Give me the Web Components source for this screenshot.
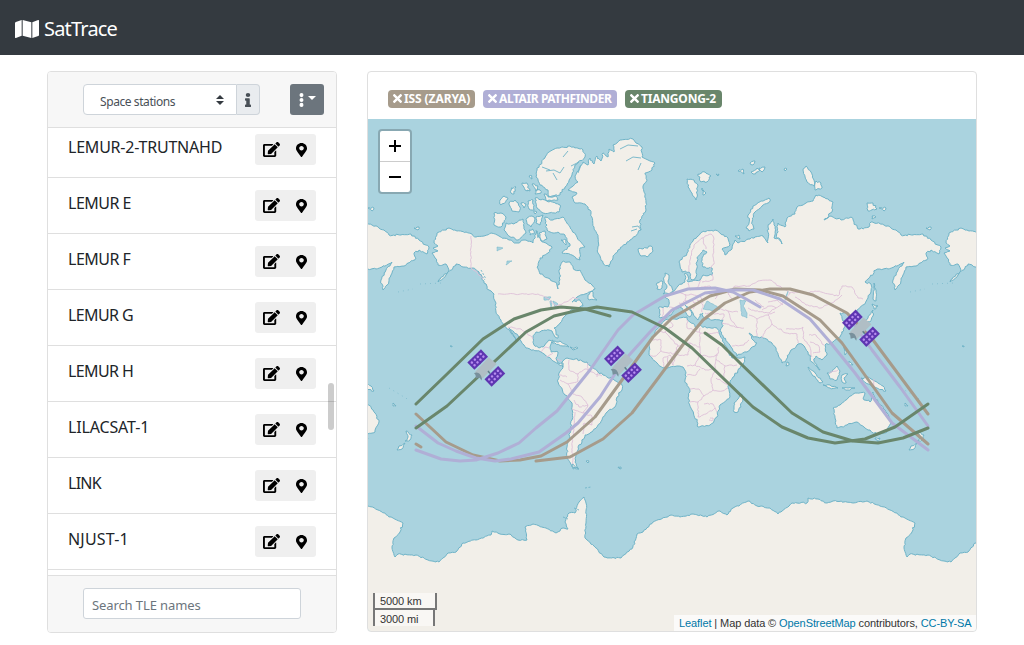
<!DOCTYPE html>
<html lang="en">
<head>
<meta charset="utf-8">
<title>SatTrace</title>
<style>
html,body{margin:0;height:100%;overflow:hidden;background:#fff}
body{font:16px/24px "Noto Sans",sans-serif;color:#212529}
</style>
</head>
<body>
<sat-app></sat-app>
<script>
const define = (name, html, ready) => customElements.define(name, class extends HTMLElement {
  constructor() {
    super();
    this.attachShadow({ mode: 'open' });
  }
  connectedCallback() {
    this.shadowRoot.innerHTML = '<style>*{box-sizing:border-box}</style>' + (typeof html === 'function' ? html(this) : html);
    if (ready) ready(this.shadowRoot, this);
  }
});

/* ---------- icons ---------- */
const ICONS = {
  map: ['0 0 576 512', '<path d="M0 118v379c0 11 11 19 22 15l138-64V0L20 58A32 32 0 0 0 0 88zM184 448l208 64V64L184 0zM554 1L416 64v448l140-56a32 32 0 0 0 20-30V16c0-11-11-19-22-15z"/>'],
  edit: ['0 0 576 512', '<path d="M402.6 83.2l90.2 90.2c3.8 3.8 3.8 10 0 13.800L274.400 405.600l-92.800 10.300c-12.400 1.400-22.900-9.100-21.500-21.500l10.300-92.800L388.800 83.200c3.800-3.800 10-3.800 13.800 0zm162-22.900l-48.800-48.800c-15.200-15.200-39.900-15.200-55.200 0l-35.400 35.400c-3.800 3.800-3.800 10 0 13.800l90.200 90.200c3.800 3.800 10 3.800 13.800 0l35.400-35.400c15.200-15.300 15.200-40 0-55.200zM384 346.200V448H64V128h229.800c3.200 0 6.200-1.300 8.500-3.500l40-40c7.600-7.600 2.200-20.500-8.500-20.500H48C21.500 64 0 85.500 0 112v352c0 26.500 21.500 48 48 48h352c26.500 0 48-21.500 48-48V306.200c0-10.700-12.900-16-20.500-8.500l-40 40c-2.200 2.300-3.500 5.300-3.500 8.500z"/>'],
  pin: ['0 0 384 512', '<path d="M172.300 501.700C27 291 0 269.400 0 192 0 86 86 0 192 0s192 86 192 192c0 77.400-27 99-172.300 309.700-9.500 13.800-29.900 13.800-39.400 0zM192 272c44.200 0 80-35.800 80-80s-35.800-80-80-80-80 35.800-80 80 35.800 80 80 80z"/>'],
  info: ['0 0 192 512', '<path d="M20 424.200h20V279.800H20c-11 0-20-9-20-20V212c0-11 9-20 20-20h112c11 0 20 9 20 20v212.200h20c11 0 20 9 20 20V492c0 11-9 20-20 20H20c-11 0-20-9-20-20v-47.800c0-11 9-20 20-20zM96 0a72 72 0 1 0 0 144A72 72 0 0 0 96 0z"/>'],
  times: ['0 0 352 352', '<path d="M243 176l100-100c12-12 12-32 0-44L320 9c-12-12-32-12-44 0L176 109 76 9C64-3 44-3 32 9L9 32c-12 12-12 32 0 44l100 100L9 276c-12 12-12 32 0 44l23 23c12 12 32 12 44 0l100-100 100 100c12 12 32 12 44 0l23-23c12-12 12-32 0-44z"/>'],
  dots: ['0 0 192 512', '<circle cx="96" cy="76" r="76"/><circle cx="96" cy="256" r="76"/><circle cx="96" cy="436" r="76"/>'],
  sort: ['0 0 8 11', '<path d="M4 0L8 4.500H0zM4 11L0 6.500h8z"/>']
};
define('sat-icon', el => {
  const [box, body] = ICONS[el.getAttribute('name')];
  return `<style>:host{display:inline-block;flex:none}svg{display:block;width:100%;height:100%;fill:currentColor}</style><svg viewBox="${box}" preserveAspectRatio="none">${body}</svg>`;
});

define('sat-navbar', `<style>
:host{display:flex;align-items:center;height:55px;padding:2px 15px 0;background:#343a40;color:#fff;font-size:20px;gap:5px;box-sizing:border-box}
sat-icon{width:24px;height:18px}
span{letter-spacing:-.8px;padding-top:1px}
</style><sat-icon name="map"></sat-icon><span><slot></slot></span>`);

define('sat-card', `<style>
:host{display:flex;flex-direction:column;border:1px solid #dfdfdf;border-radius:4px;overflow:hidden;background:#fff}
</style><slot></slot>`);

/* ---------- satellite list ---------- */
define('sat-toolbar', `<style>
:host{display:flex;height:56px;flex:none;padding:12px 12px 0 35px;background:#f7f7f7;border-bottom:1px solid #dfdfdf;font-size:12px;color:#495057;box-sizing:border-box}
.select{display:flex;align-items:center;justify-content:space-between;width:154px;height:31px;border:1px solid #ced4da;border-radius:4px 0 0 4px;background:#fff;padding:4px 12px 0 16px}
.select span{white-space:nowrap;letter-spacing:-.42px}
.select sat-icon{width:8px;height:10px;color:#343a40;margin-top:-4px}
.info{display:flex;align-items:center;justify-content:center;width:23px;height:31px;border:1px solid #ced4da;border-left:0;border-radius:0 4px 4px 0;background:#e9ecef}
.info sat-icon{width:6px;height:14px}
.menu{display:flex;align-items:center;gap:4px;width:34px;height:31px;margin-left:auto;padding-left:9px;border-radius:3px;background:#6c757d;color:#fff}
.menu sat-icon{width:5px;height:14px}
.caret{border:4px solid transparent;border-top-color:#fff;border-bottom:0;margin-top:-3px}
</style>
<div class="select"><span>Space stations</span><sat-icon name="sort"></sat-icon></div>
<div class="info"><sat-icon name="info"></sat-icon></div>
<div class="menu"><sat-icon name="dots"></sat-icon><i class="caret"></i></div>`);

define('sat-row', el => `<style>
:host{display:flex;height:56px;flex:none;padding:12px 20px 0;border-bottom:1px solid #dfdfdf;justify-content:space-between;box-sizing:border-box}
span{letter-spacing:${el.getAttribute('tracking')}px;white-space:nowrap;padding-top:1px}
.actions{display:flex;align-items:center;gap:16px;width:61px;height:31px;padding-left:8px;background:#efefef;border-radius:3px;color:#000}
.edit{width:17px;height:15px}.pin{width:11px;height:14px}
</style><span><slot></slot></span>
<div class="actions"><sat-icon class="edit" name="edit"></sat-icon><sat-icon class="pin" name="pin"></sat-icon></div>`);

define('sat-list', `<style>
:host{display:flex;flex-direction:column;justify-content:flex-start;flex:1;min-height:0;overflow:hidden;position:relative}
.rows{margin-top:-6px}
.thumb{position:absolute;right:2px;top:255px;width:6px;height:47px;border-radius:3px;background:rgba(0,0,0,.2)}
</style><div class="rows"><slot></slot></div><div class="thumb"></div>`);

define('sat-search', `<style>
:host{display:block;height:57px;flex:none;padding:12px 35px;background:#f7f7f7;border-top:1px solid #dfdfdf;box-sizing:border-box}
input{display:block;width:100%;height:31px;border:1px solid #ced4da;border-radius:3px;padding:2px 8px 0;font:13px "Noto Sans",sans-serif;letter-spacing:-.1px;outline:0;background:#fff}
input::placeholder{color:#6c757d;opacity:1}
</style><input placeholder="Search TLE names">`);

define('sat-badge', el => `<style>
:host{display:flex;align-items:center;gap:2px;height:18px;padding:0 5px;border-radius:4px;color:#fff;background:${el.getAttribute('color')};font-weight:700;font-size:12px;width:${el.getAttribute('w')}px;white-space:nowrap;box-sizing:border-box}
sat-icon{width:9px;height:9px}
span{line-height:18px;letter-spacing:${el.getAttribute('tracking')}px}
</style><sat-icon name="times"></sat-icon><span><slot></slot></span>`);

define('sat-badges', `<style>
:host{display:flex;align-items:center;gap:8px;height:47px;flex:none;padding:6px 20px 0;box-sizing:border-box}
</style><slot></slot>`);

/* ---------- world map ---------- */
/* Web-Mercator outlines; the world is 512 units wide, from x=416 to x=928. */
const LAND = [
  /* North America */
  '434,243 437,233 449,228 457,231 466,232 476,237 484,236 491,233 499,236 509,240 517,243 524,240 533,243 537,231 541,240 546,243 552,247 548,253 540,258 537,267 540,274 548,278 555,282 558,289 560,280 559,270 562,262 570,262 575,270 580,270 585,280 592,285 595,289 585,294 577,297 572,302 580,300 583,306 576,308 570,311 566,315 563,318 560,323 554,328 556,332 558,338 555,337 552,331 545,330 536,332 533,337 534,345 539,348 543,347 548,341 553,340 550,347 551,352 558,352 556,358 558,363 563,363 563,367 555,362 548,357 541,352 530,349 526,348 521,341 514,332 509,328 516,340 511,333 504,325 501,320 496,312 495,301 494,294 489,290 484,283 479,272 473,268 463,267 456,264 453,268 446,275 438,282 449,270 446,264 438,265 435,258 432,253 438,251 433,248 438,246',
  /* Greenland */
  '583,162 588,165 590,158 594,164 597,156 601,161 603,153 608,157 609,149 614,152 613,145 620,140 633,139 636,143 642,147 642,157 648,160 655,163 652,170 645,173 647,180 643,186 645,195 646,203 646,210 640,220 641,230 630,240 618,250 613,258 609,267 603,263 598,253 598,237 594,227 590,210 585,204 575,203 572,197 577,193 568,190 578,182 575,176',
  /* Arctic archipelago */
  '583,150 585,157 575,165 572,175 565,187 560,195 548,197 548,190 540,185 536,177 537,168 545,158 549,152 557,148 570,146',
  '535,198 545,200 560,205 559,212 543,213 537,208',
  '545,217 553,220 563,217 570,227 577,237 585,247 580,248 580,260 572,255 562,253 570,246 565,235 558,232 553,233 547,230',
  '506,223 514,224 523,219 524,227 526,233 518,240 509,236 504,230',
  '494,213 501,213 506,217 501,227 494,225',
  '509,203 515,200 520,207 519,212 512,211', '500,200 504,196 508,199 501,205',
  '522,183 527,183 530,191 525,190', '528,201 533,200 534,210 529,209',
  '527,218 532,216 535,219 531,227 527,224', '536,217 543,215 540,225 536,223', '536,190 540,190 541,193 535,194', '532,184 538,186 536,191',
  '511,188 516,187 514,194 511,193', '539,233 545,231 547,239 541,241', '561,240 566,240 566,245',
  '529,230 533,229 534,234 530,235', '534,211 537,212 535,214', '544,194 550,197 556,196 558,200 547,201', '529,176 532,176 532,179', '521,203 526,204 524,208',
  /* Newfoundland, Caribbean */
  '588,295 592,291 593,296 597,300 588,299', '551,342 560,341 569,347 563,346', '570,347 578,348 573,350',
  /* Iceland, Svalbard, Arctic Russia */
  '638,249 643,249 651,246 653,251 647,257 640,255', '687,179 694,180 698,185 696,200 692,193 688,187', '698,174 705,172 711,176 707,182 700,181', '702,188 706,193 703,195',
  '738,171 743,169 744,174', '751,172 757,168 760,170 753,174', '759,168 765,167 762,172', '750,163 755,161 753,165', '716,174 719,174 718,176', '784,169 787,169 785,171',
  '746,228 749,223 748,215 753,206 761,201 769,198 770,201 762,206 754,213 752,222 754,229 749,231',
  '803,170 806,166 811,172 814,180 814,186 807,182', '816,181 821,183 822,188 815,190',
  '867,203 873,203 877,209 868,211', '879,208 886,208 884,211', '872,216 876,217 872,219', '926,228 931,227 930,230',
  '735,236 739,235 740,239',
  /* British Isles */
  '665,273 669,275 668,281 672,288 672,292 663,294 667,287 664,281', '657,283 662,281 662,288 657,289',
  /* Eurasia */
  '660,318 659,307 668,307 669,300 665,297 672,293 678,286 685,282 685,273 688,276 688,282 700,280 703,275 712,275 712,268 703,267 702,258 707,252 703,250 697,258 697,268 696,277 692,280 689,272 682,272 679,262 687,253 693,241 702,232 715,230 728,238 730,245 722,249 725,255 731,250 735,240 738,243 750,239 763,236 768,243 768,227 773,219 775,228 774,238 780,239 782,244 777,238 778,223 785,227 787,218 795,214 797,207 806,203 813,201 816,195 823,197 833,202 832,212 824,220 831,216 841,220 851,217 854,222 858,229 869,227 871,222 884,225 896,230 901,235 913,235 923,234 931,240 941,247 939,254 931,250 926,253 928,258 916,266 906,267 903,275 899,285 895,290 893,280 898,270 904,262 894,267 888,269 876,270 865,282 871,284 871,291 868,298 863,305 857,310 855,323 850,323 850,315 847,313 840,313 842,318 845,325 840,337 833,342 825,345 827,355 822,360 816,356 814,361 820,370 812,362 808,352 803,345 798,344 790,352 786,360 782,363 776,348 772,343 763,338 753,337 749,333 753,340 757,343 747,352 737,356 731,347 720,331 722,327 723,320 713,320 703,317 703,313 700,314 698,320 693,313 688,307 685,305 688,309 692,314 690,317 682,308 675,308 671,315 665,318',
  /* Africa */
  '665,320 675,319 687,317 690,322 697,328 700,325 707,328 717,328 719,333 727,348 732,358 745,357 743,365 733,377 728,387 730,397 720,405 717,417 710,425 698,427 697,422 692,410 688,398 690,392 685,380 686,373 683,367 677,366 663,368 657,363 649,355 649,345 655,332',
  '742,394 743,400 738,412 734,412 734,403 738,399',
  /* South America */
  '562,362 567,358 575,359 587,362 592,367 603,375 613,379 622,385 622,390 617,397 615,407 607,412 602,420 597,427 592,432 585,435 582,442 578,447 577,453 575,462 578,468 572,467 567,457 567,447 570,433 572,420 572,403 565,395 558,382 559,373 563,368',
  '572,464 579,469 573,469',
  /* Asia-Pacific islands */
  '874,283 876,290 876,301 873,299', '872,304 878,306 874,309', '873,310 873,316 870,322 861,324 868,318', '858,324 861,326 859,328',
  '808,367 815,373 823,382 820,383 813,376', '823,385 830,385 838,388 830,388', '827,373 832,372 837,366 840,371 837,380 830,379',
  '842,375 848,374 844,378 846,383 842,382', '844,347 847,352 845,355', '849,361 853,365 848,365', '861,378 868,377 873,380 883,386 886,391 873,387 866,383', '787,362 789,365 786,366', '842,388 848,388 855,388 848,390',
  /* Australia, New Zealand */
  '833,408 840,405 848,398 855,393 865,393 863,398 870,402 873,392 878,402 887,413 891,422 887,432 877,434 868,430 864,427 857,422 847,425 837,428 835,418',
  '875,438 880,438 878,442', '918,431 924,435 922,440 917,441 920,437', '917,443 914,449 909,450 911,446',
  '586,461 589,461 588,463', '618,467 621,467 621,469', '450,346 452,346 452,347', '905,403 908,406 905,406'
];
const WATER = [
  '703,309 707,301 713,304 720,309 713,311', '740,300 746,301 743,306 747,313 747,318 742,316 741,309',
  '544,297 551,297 549,300 544,300', '550,301 552,301 551,307', '553,301 558,304 555,307', '507,261 512,261 506,265', '497,247 503,248 497,251', '785,300 787,295 788,291 786,298'
];
const ANTARCTICA = '416,555 428,560 439,562 448,553 456,552 463,543 476,540 491,535 492,531 500,534 509,534 518,540 527,540 525,527 533,524 546,528 556,533 563,528 568,529 565,522 569,513 575,513 579,502 584,497 586,503 586,523 585,538 596,548 604,557 621,558 633,547 637,534 643,532 653,522 671,515 680,517 693,514 707,517 720,511 727,515 733,508 748,501 757,506 770,508 778,514 792,503 807,503 808,498 818,499 827,503 833,501 853,503 867,501 880,506 890,510 905,518 915,523 912,532 906,538 904,548 907,557 910,554 923,555 928,555';
const BORDERS = [
  '471,236 471,268 477,272 483,279', '498,294 538,294 549,299 556,306 566,302 573,297 578,299', '508,327 521,329 527,333 533,339',
  '541,352 545,347 549,348', '546,357 553,353', '557,359 562,361',
  '569,360 569,370 578,374 578,381 568,384 560,380', '578,374 585,369 592,372 602,376', '568,384 573,394 582,397 588,405 583,413 572,409', '583,413 592,416 592,425 584,423 583,434', '575,412 574,430 572,445 573,464', '588,363 588,371', '598,373 597,377', '574,400 579,407 588,405', '559,375 567,377',
  '655,332 665,332 673,326 670,320', '665,332 678,346 690,343 700,347 700,328', '687,320 687,328 700,332', '700,333 719,333', '678,346 674,354 661,351 661,340 652,340', '690,343 688,355 676,355 673,365', '700,347 700,355 695,365 687,366', '719,347 716,359 725,366 737,365', '695,365 705,370 715,369 716,359', '687,375 696,375 700,369', '690,389 699,389 704,396 698,402 690,402', '704,396 713,390 711,381 715,370', '713,390 722,391 728,388', '698,402 698,417 706,414 715,408', '704,404 713,404 717,412', '716,378 728,385', '725,366 724,377', '664,367 663,358 670,355 673,365', '661,351 656,356 650,355', '668,357 668,366', '710,418 713,418 712,421 709,420', '700,355 710,357 718,355',
  '689,272 690,260 694,245 702,238 711,234 714,239 713,254 714,264 710,269', '703,238 706,249', '678,292 685,295 691,294 700,296 703,303', '688,283 690,290 697,288 701,280', '702,282 713,280 712,274', '701,287 710,286 719,291 715,299', '669,307 677,309', '683,302 690,300 696,303 693,309', '697,300 703,305 702,312', '685,294 686,303 679,303', '663,308 663,317', '705,313 724,314 723,320', '718,308 728,311 738,312', '728,311 731,320 738,328', '722,323 732,326 744,328', '732,346 744,345 749,340',
  '733,300 728,294 735,286 750,286 758,281 770,280 779,286 790,293 799,292 807,293 815,291 829,294 838,296 842,286 852,287 858,298 863,299', '790,293 785,302 776,308 768,313 755,311 748,308', '795,297 806,305 821,308 834,302 842,295', '749,315 757,319 757,336', '757,319 768,315 775,312', '768,315 772,324 765,331 762,338', '772,324 786,333 797,334 798,343', '786,329 798,329 803,327', '803,327 803,338 809,345 812,357', '809,335 816,335 824,345', '810,342 818,345 820,352 813,353', '768,302 777,300 783,305', '755,300 764,307', '829,373 838,370', '874,379 874,388', '846,316 852,315', '762,310 770,306 776,308'
];
/* Orbits as ground tracks, one colour for each satellite. */
const TRACKS = [
  ['#a69b8b', '416,414 446,442 473,455 500,461 520,460 541,456 567,442 595,417 622,380 653,337 672,318 710,296 735,289 760,290 783,296 820,320 842,343 892,413 928,444'],
  ['#a69b8b', '536,461 570,457 603,439 632,413 659,377 685,342 703,320 725,303 750,292 770,289 790,289 813,295 847,313 873,340 928,414'],
  ['#a69b8b', '416,444 421,447'],
  ['#b0afd6', '416,426 438,443 456,451 476,458 495,461 511,459 539,452 566,433 578,423 600,397 622,363 650,332 672,310 705,293 730,290 753,290 780,299 810,319 830,342 855,373 892,423 928,450'],
  ['#b0afd6', '416,450 441,459 460,461 476,460 498,453 519,443 536,428 557,411 590,370 618,330 633,315 665,296 688,289 715,288 733,292 746,299 760,307'],
  ['#b0afd6', '855,326 872,350 900,387 928,426'],
  ['#69866b', '416,404 444,377 483,339 514,319 541,310 561,307 585,309 610,316'],
  ['#69866b', '416,428 447,406 479,376 526,332 554,316 575,311 597,307 632,312 665,328 692,348 724,379 753,407 782,427 808,438 835,443 865,439 895,427 928,404'],
  ['#69866b', '705,333 722,345 740,363 792,413 823,432 853,441 878,443 903,438 928,428']
];
let seed = 7;
const rnd = () => ((seed = (seed * 16807) % 2147483647) / 2147483647) - .5;
const parse = s => s.split(' ').map(p => p.split(',').map(Number));
/* Splits each edge in short steps with a small offset, for a ragged coast. */
const rough = (s, closed, amp) => {
  const p = parse(s), out = [];
  const n = closed ? p.length : p.length - 1;
  for (let i = 0; i < n; i++) {
    const a = p[i], b = p[(i + 1) % p.length];
    const k = Math.max(1, Math.round(Math.hypot(b[0] - a[0], b[1] - a[1]) / 2));
    for (let j = 0; j < k; j++) {
      const t = j / k, m = j ? amp : 0;
      out.push((a[0] + (b[0] - a[0]) * t + rnd() * m).toFixed(1) + ' ' + (a[1] + (b[1] - a[1]) * t + rnd() * m).toFixed(1));
    }
  }
  if (!closed) out.push(p[p.length - 1].join(' '));
  return 'M' + out.join('L') + (closed ? 'Z' : '');
};
const panel = (x, y) => {
  let dots = '';
  for (let i = 0; i < 4; i++) for (let j = 0; j < 2; j++)
    dots += `<circle cx="${3.300 + i * 4.100}" cy="${3.200 + j * 3.800}" r="1.250" fill="#b78df0"/>`;
  return `<g transform="translate(${x} ${y}) rotate(-44)"><rect width="19" height="10.200" fill="#5e35b1"/>${dots}</g>`;
};
const sat = (x, y) => `<g transform="translate(${x} ${y})">
<path d="M2.700-9.700L10.700-3-3.300 11.500-11 5z" fill="#b0bec5"/><path d="M-12 6q6-2.500 8 5.500l-.5 2-2-3-3.500 1-.5-3.500z" fill="#78909c"/><path d="M-7.500-5l2 2M2 4l2 2.500" stroke="#607d8b" stroke-width="1.500"/>
${panel(-18.700, -4.500)}${panel(-1.500, 12.300)}</g>`;

define('sat-world', () => {
  const coast = LAND.map(s => rough(s, true, 1.800)).join('');
  const lakes = WATER.map(s => rough(s, true, .8)).join('');
  const ice = rough(ANTARCTICA, false, 1.500);
  const lines = BORDERS.map(s => rough(s, false, 1.400)).join('');
  return `<style>:host{display:block;height:100%}svg{display:block;width:100%;height:100%}</style>
<svg viewBox="368 119 608 512"><defs><g id="w">
<path d="${coast}" fill="#f2efe9" stroke="#6fb3c7"/>
<path d="${ice}V640H416Z" fill="#f2efe9"/><path d="${ice}" fill="none" stroke="#6fb3c7"/>
<path d="${lakes}" fill="#aad3df" stroke="#79b9cb" stroke-width=".6"/>
<path d="${lines}" fill="none" stroke="#dec0d8" stroke-width=".9"/>
<g fill="none" stroke="#6fb3c7" stroke-width=".9"><path d="M546 171l8-1 6 3 4-6M553 173l4 7M542 167l8 3M620 149l8-4 10 1M626 161l7-4 8 1M638 170l3-7M632 227l6-1 3 4M631 231l6-2M563 157l5-6M571 166l8-4M536 230l2 8M581 165l-3 8"/>
<path d="M478 271l7 9M481 270l5 9M585 488l6-1M574 508l5 2M563 517l5 2" stroke-dasharray="2 1.500"/>
<path d="M420 284l22-1M389 388l20 12M910 292l15-3" stroke-dasharray="1 4" stroke-opacity=".7"/></g>
</g></defs>
<rect x="368" y="119" width="608" height="512" fill="#aad3df"/>
<use href="#w" x="-512"/><use href="#w"/><use href="#w" x="512"/>
<g fill="none" stroke-width="3" stroke-linecap="round" stroke-linejoin="round">${TRACKS.map(([c, s]) => `<polyline points="${s}" stroke="${c}"/>`).join('')}</g>
${sat(486, 367)}${sat(622.700, 363.300)}${sat(860.700, 327.300)}
</svg>`;
});

define('sat-map', `<style>
:host{display:block;position:relative;flex:1;min-height:0;font:11px/14px "Liberation Sans",Arial,sans-serif;color:#333}
.zoom{position:absolute;left:10px;top:10px;width:34px;height:65px;border:2px solid rgba(0,0,0,.2);border-radius:4px;background-clip:padding-box;background-color:#fff;display:flex;flex-direction:column}
.zoom div{flex:1;display:flex;align-items:center;justify-content:center}
.zoom div+div{border-top:1px solid #ccc}
.zoom svg{display:block}
.scale{position:absolute;left:5px;bottom:5px;display:flex;flex-direction:column}
.scale div{height:17px;border:2px solid #777;border-top:0;background:rgba(255,255,255,.5);padding:1px 5px 0;width:64px;line-height:14px;white-space:nowrap;letter-spacing:-.1px}
.scale div+div{border-top:2px solid #777;border-bottom:0;margin-top:-2px;width:62px;height:18px;padding-top:2px}
.attr{position:absolute;right:0;bottom:0;height:16px;width:302px;padding:1px 5px 0;background:rgba(255,255,255,.7);white-space:nowrap;line-height:15px;letter-spacing:-.095px}
a{color:#0078a8}
</style>
<sat-world></sat-world>
<div class="zoom"><div><svg width="14" height="14" viewBox="0 0 14 14"><path d="M7 1v12M1 7h12" stroke="#000" stroke-width="2"/></svg></div><div><svg width="14" height="14" viewBox="0 0 14 14"><path d="M1 7h12" stroke="#000" stroke-width="2"/></svg></div></div>
<div class="scale"><div>5000 km</div><div>3000 mi</div></div>
<div class="attr"><a>Leaflet</a> | Map data © <a>OpenStreetMap</a> contributors, <a>CC-BY-SA</a></div>`);

define('sat-app', `<style>
:host{display:block;height:645px}
main{display:grid;grid-template-columns:290px 610px;grid-template-rows:562px;column-gap:30px;padding:16px 47px 0}
.list{height:562px;box-sizing:border-box}
.view{height:561px;box-sizing:border-box}
</style>
<sat-navbar>SatTrace</sat-navbar>
<main>
<sat-card class="list"><sat-toolbar></sat-toolbar>
<sat-list><sat-row tracking="-.22">LEMUR-2-TRUTNAHD</sat-row><sat-row tracking="-.5">LEMUR E</sat-row><sat-row tracking="-.5">LEMUR F</sat-row><sat-row tracking="-.6">LEMUR G</sat-row><sat-row tracking="-.6">LEMUR H</sat-row><sat-row tracking="-.15">LILACSAT-1</sat-row><sat-row tracking="-.75">LINK</sat-row><sat-row tracking=".2">NJUST-1</sat-row></sat-list>
<sat-search></sat-search></sat-card>
<sat-card class="view"><sat-badges><sat-badge color="#a69b8b" w="87" tracking="-.1">ISS (ZARYA)</sat-badge><sat-badge color="#b0afd6" w="134" tracking="-.42">ALTAIR PATHFINDER</sat-badge><sat-badge color="#69866b" w="97" tracking="-.2">TIANGONG-2</sat-badge></sat-badges>
<sat-map></sat-map></sat-card>
</main>`);
</script>
</body>
</html>
